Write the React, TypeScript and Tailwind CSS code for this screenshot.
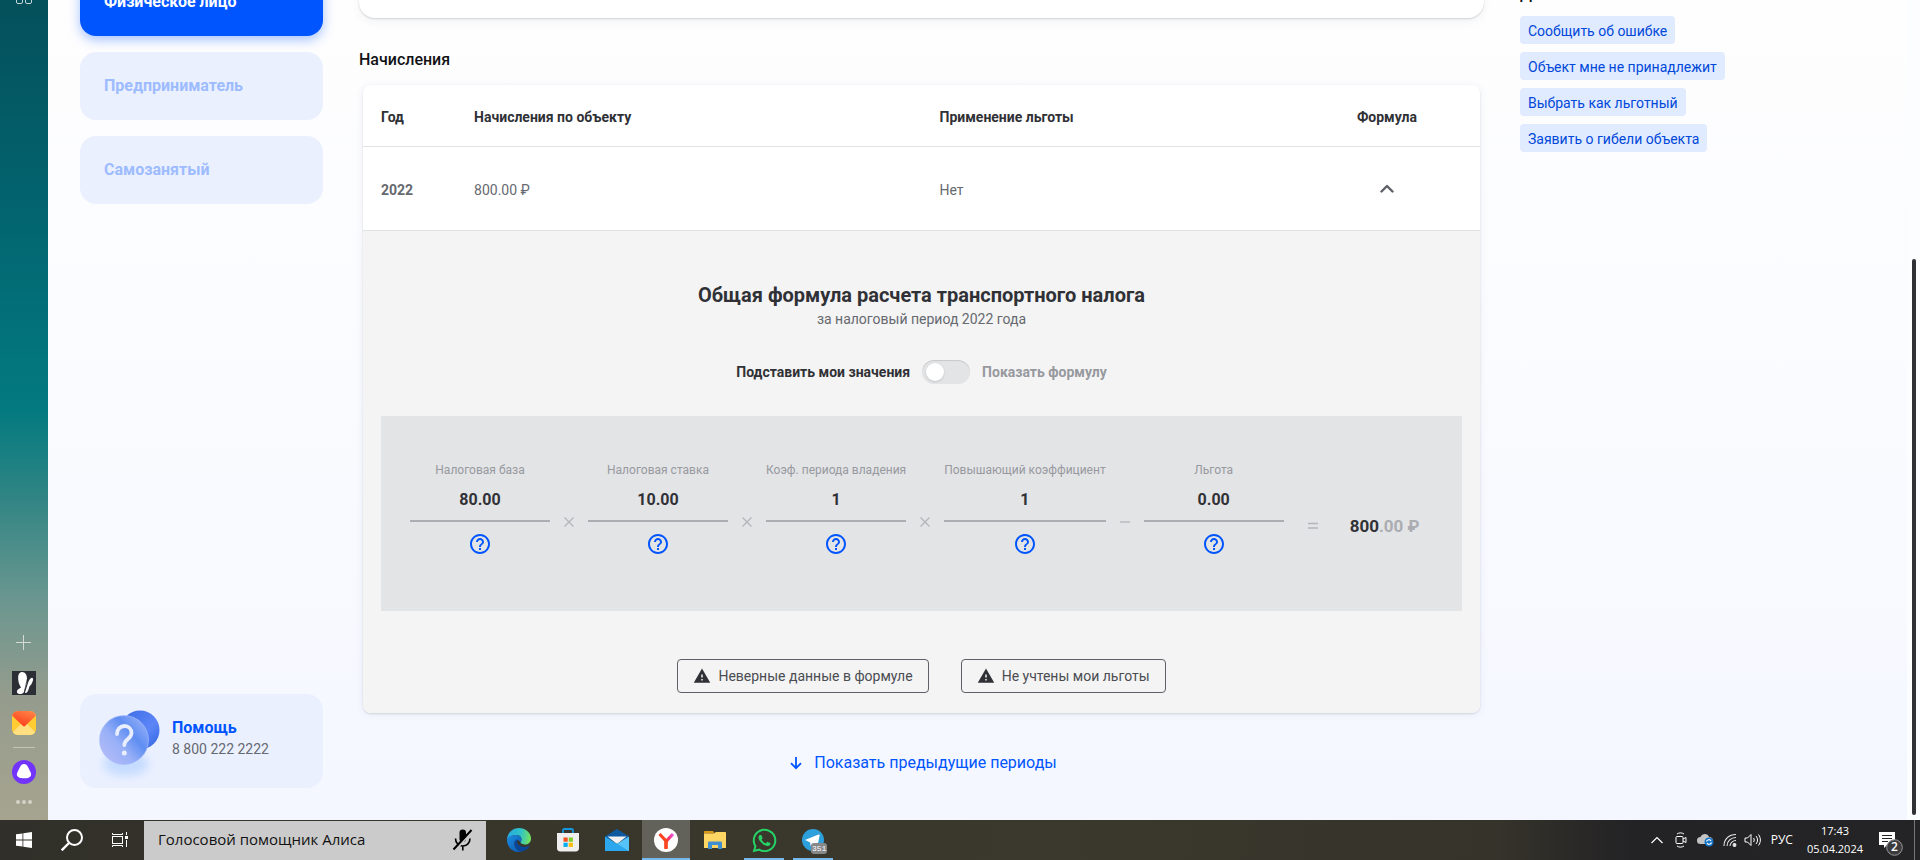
import type { ReactNode } from "react";
import { MdHelpOutline, MdWarning } from "react-icons/md";
import { FaWhatsapp } from "react-icons/fa";

const roboto = "font-['Roboto','Liberation_Sans',sans-serif]";
const segoe = "font-['Open_Sans','Noto_Sans',sans-serif]";

function BrowserRail() {
  return (
    <aside className="flex w-12 shrink-0 flex-col items-center bg-linear-[180deg,#04505b_0%,#02636e_24%,#037a80_50%,#2d8483_60%,#6a968f_73%,#959c8d_85%,#a6a48f_100%]">
      <button aria-label="Табло" className="-mt-3 h-4 w-4">
        <svg viewBox="0 0 16 16" className="h-4 w-4" fill="none" stroke="#c3d6d8">
          <rect x="0.5" y="0.5" width="6" height="6" rx="1.5" />
          <rect x="9.5" y="0.5" width="6" height="6" rx="1.5" />
          <rect x="0.5" y="9.5" width="6" height="6" rx="1.5" />
          <rect x="9.5" y="9.5" width="6" height="6" rx="1.5" />
        </svg>
      </button>
      <div className="flex-1" />
      <button aria-label="Добавить" className="h-4 w-4">
        <svg viewBox="0 0 16 16" className="h-4 w-4" stroke="#d3dad3" fill="none">
          <path d="M7.5 0v15M0 7.5h15" />
        </svg>
      </button>
      <button aria-label="MSN" className="mt-5 h-6 w-6">
        <svg viewBox="0 0 24 24" className="h-6 w-6">
          <rect width="24" height="24" fill="#2b2e35" />
          <path d="M10 1c3.500 0 5 3 5 7 0 2-.3 4-.8 6L12 21c-.5 1.500-3 2.300-5 2-1.500-.3-2.500-1.500-2-3 .6-2 2.500-2.500 4-3.500C6.500 13 6 9 6.200 5.500 6.500 2.500 8 1 10 1z" fill="#fff" />
          <path d="M20.500 7c1.300.8.300 3.500-1 6-.6 1.200-1.500 1.500-2 2.500-.6 1.300-1 5.500-3.500 6.500-1 .3-1-.5-.7-1.500L16 12c1-3 3-5.800 4.500-5z" fill="#fff" />
          <path d="M15.300 8l-3 13" stroke="#2b2e35" strokeWidth="0.700" />
        </svg>
      </button>
      <button aria-label="Почта" className="mt-4 h-6 w-6">
        <svg viewBox="0 0 24 24" className="h-6 w-6">
          <defs>
            <linearGradient id="mailRed" x1="1" y1="0" x2="0.400" y2="1">
              <stop offset="0" stopColor="#ff8a4a" />
              <stop offset="1" stopColor="#fb3f1d" />
            </linearGradient>
            <clipPath id="mailClip"><rect width="24" height="24" rx="6" /></clipPath>
          </defs>
          <g clipPath="url(#mailClip)">
            <rect width="24" height="24" fill="#ffcc33" />
            <path d="M0 24V22L9 13h6l9 9v2z" fill="#ffdf80" />
            <path d="M0 0h24v4.500L13 15c-.6.500-1.400.500-2 0L0 4.500z" fill="url(#mailRed)" />
          </g>
        </svg>
      </button>
      <div className="mt-3 h-px w-[22px] bg-[#c3c4b6]" />
      <button aria-label="Алиса" className="mt-3 h-6 w-6">
        <svg viewBox="0 0 24 24" className="h-6 w-6">
          <circle cx="12" cy="12" r="12" fill="#7234fb" />
          <path d="M12 4c2 0 3 1.200 4 3l2.700 5.500c1 2.300.3 4-1.700 4.900-1.500.6-3 .8-5 .8s-3.500-.2-5-.8c-2-.9-2.700-2.600-1.700-4.900L8 7c1-1.800 2-3 4-3z" fill="#fff" />
        </svg>
      </button>
      <button aria-label="Ещё" className="mt-4 mb-4 flex gap-[2px]">
        <span className="h-1 w-1 rounded-full bg-[#d4d3c9]" />
        <span className="h-1 w-1 rounded-full bg-[#d4d3c9]" />
        <span className="h-1 w-1 rounded-full bg-[#d4d3c9]" />
      </button>
    </aside>
  );
}

function HelpArt() {
  return (
    <svg viewBox="0 0 64 76" className="h-[76px] w-16 shrink-0">
      <defs>
        <linearGradient id="backDisc" x1="0" y1="0" x2="1" y2="1">
          <stop offset="0" stopColor="#3d6be6" />
          <stop offset="0.600" stopColor="#5c86f7" />
          <stop offset="1" stopColor="#2f62e0" />
        </linearGradient>
        <linearGradient id="frontDisc" x1="0.100" y1="0.900" x2="0.900" y2="0.200">
          <stop offset="0" stopColor="#b3bbf8" />
          <stop offset="0.400" stopColor="#98b0f7" />
          <stop offset="0.720" stopColor="#5f8ef2" />
          <stop offset="1" stopColor="#8aa9f7" />
        </linearGradient>
        <filter id="glow" x="-50%" y="-50%" width="200%" height="200%">
          <feGaussianBlur stdDeviation="5" />
        </filter>
      </defs>
      <ellipse cx="29" cy="58" rx="23" ry="12" fill="#c5dcff" filter="url(#glow)" />
      <circle cx="43" cy="24" r="19.500" fill="url(#backDisc)" />
      <circle cx="27" cy="34" r="24.500" fill="url(#frontDisc)" stroke="#a9c0fb" strokeWidth="0.600" />
      <path d="M20 28c0-5 3.500-8 7.500-8s7 3 7 7c0 6-7.200 6-7.200 12" fill="none" stroke="#e9eefe" strokeWidth="3.800" strokeLinecap="round" />
      <circle cx="27.300" cy="47" r="2.500" fill="#e9eefe" />
    </svg>
  );
}

function RoleNav() {
  const idle =
    "h-[68px] rounded-2xl bg-[#ebf0ff] px-6 text-left text-base font-bold text-[#9dbcff]";
  return (
    <nav className="flex w-[243px] shrink-0 flex-col gap-4 pb-8">
      <button className="-mt-8 h-[68px] shrink-0 rounded-2xl bg-[#0055ff] px-6 text-left text-base font-bold text-white shadow-[0_4px_12px_rgba(0,85,255,0.35)]">
        Физическое лицо
      </button>
      <button className={idle}>Предприниматель</button>
      <button className={idle}>Самозанятый</button>
      <div className="flex-1" />
      <a href="#help" className="flex h-[94px] items-start rounded-2xl bg-[#ebf0ff] pt-3 pl-[17px]">
        <HelpArt />
        <span className="mt-[11px] ml-[11px] flex flex-col">
          <span className="text-base leading-[22px] font-bold text-[#0055ff]">Помощь</span>
          <span className="text-sm leading-5 text-[#66696f]">8 800 222 2222</span>
        </span>
      </a>
    </nav>
  );
}

function Operator({ kind }: { kind: "times" | "minus" }) {
  return (
    <div className="flex w-[38px] justify-center pt-[55px]">
      <svg viewBox="0 0 10 10" className="h-[10px] w-[10px]" stroke="#b3b5ba" strokeWidth="1.300" fill="none">
        {kind === "times" ? <path d="M0.500 0.500l9 9M9.500 0.500l-9 9" /> : <path d="M0 5h10" />}
      </svg>
    </div>
  );
}

function Term({ label, value }: { label: string; value: string }) {
  return (
    <div className="flex min-w-[140px] flex-col items-center">
      <span className="text-xs leading-4 whitespace-nowrap text-[#97999f]">{label}</span>
      <span className="mt-[10px] text-base leading-6 font-bold text-[#303136]">{value}</span>
      <span className="mt-2 h-[2px] w-full bg-[#abadb2]" />
      <button aria-label={"Подсказка: " + label} className="mt-[10px] text-[#0055ff]">
        <MdHelpOutline className="h-6 w-6" />
      </button>
    </div>
  );
}

function WarnButton({ children }: { children: ReactNode }) {
  return (
    <button className="flex h-[34px] items-center gap-[7px] rounded border border-[#5d6066] px-[15px] text-sm text-[#4a4c52]">
      <MdWarning className="h-[18px] w-[18px] text-[#303136]" />
      {children}
    </button>
  );
}

function Formula() {
  return (
    <section className="flex flex-col items-center px-[18px] pt-[50px] pb-5">
      <h3 className="text-xl leading-7 font-bold text-[#303136]">
        Общая формула расчета транспортного налога
      </h3>
      <p className="text-sm leading-5 text-[#66696f]">за налоговый период 2022 года</p>
      <label className="mt-[31px] flex cursor-pointer items-center gap-3 text-sm font-bold">
        <span className="text-[#303136]">Подставить мои значения</span>
        <input type="checkbox" className="peer sr-only" />
        <span className="flex h-6 w-12 items-center rounded-full bg-[#e3e4e6] px-1 shadow-[inset_0_1px_1px_rgba(0,0,0,0.12)]">
          <span className="h-[18px] w-[18px] rounded-full bg-white shadow-sm" />
        </span>
        <span className="text-[#97999f]">Показать формулу</span>
      </label>
      <div className="mt-8 flex h-[195px] w-full bg-[#e3e4e6] px-[29px] pt-[46px]">
        <Term label="Налоговая база" value="80.00" />
        <Operator kind="times" />
        <Term label="Налоговая ставка" value="10.00" />
        <Operator kind="times" />
        <Term label="Коэф. периода владения" value="1" />
        <Operator kind="times" />
        <Term label="Повышающий коэффициент" value="1" />
        <Operator kind="minus" />
        <Term label="Льгота" value="0.00" />
        <div className="flex w-[58px] justify-center pt-[59px]">
          <svg viewBox="0 0 10 10" className="h-[10px] w-[10px]" stroke="#b3b5ba" strokeWidth="1.300" fill="none">
            <path d="M0 2.500h10M0 7h10" />
          </svg>
        </div>
        <div className="pt-[52px] pl-2 text-[17px] leading-6 font-bold whitespace-nowrap text-[#303136]">
          800<span className="text-[#abadb2]">.00 ₽</span>
        </div>
      </div>
      <div className="mt-12 flex gap-8">
        <WarnButton>Неверные данные в формуле</WarnButton>
        <WarnButton>Не учтены мои льготы</WarnButton>
      </div>
    </section>
  );
}

function Charges() {
  return (
    <main className="flex min-w-0 flex-1 flex-col">
      <div className="-mt-4 h-[34px] shrink-0 rounded-2xl bg-white shadow-[0_1px_2px_rgba(0,0,0,0.15),0_4px_10px_rgba(40,50,90,0.05)]" />
      <h2 className="mt-[30px] text-base leading-6 font-medium text-[#111215]">Начисления</h2>
      <div className="mx-1 mt-[13px] overflow-hidden rounded-lg bg-white shadow-[0_1px_2px_rgba(0,0,0,0.12),0_1px_8px_rgba(40,60,110,0.08)]">
        <table className="w-full table-fixed border-collapse text-sm text-[#66696f]">
          <thead>
            <tr className="h-[61px] border-b border-[#e1e2e4] text-left text-[#303136]">
              <th className="w-1/12 pt-1 pl-[18px] font-bold">Год</th>
              <th className="w-5/12 pt-1 pl-[18px] font-bold">Начисления по объекту</th>
              <th className="w-4/12 pt-1 pl-[18px] font-bold">Применение льготы</th>
              <th className="w-2/12 pt-1 text-center font-bold">Формула</th>
            </tr>
          </thead>
          <tbody>
            <tr className="h-[84px] border-b border-[#e1e2e4]">
              <td className="pt-1 pl-[18px] font-bold">2022</td>
              <td className="pt-1 pl-[18px]">800.00 ₽</td>
              <td className="pt-1 pl-[18px]">Нет</td>
              <td className="text-center">
                <button aria-label="Свернуть" className="align-middle">
                  <svg viewBox="0 0 14 10" className="h-[10px] w-[14px]" fill="none" stroke="#5d6066" strokeWidth="2.400" strokeLinecap="round" strokeLinejoin="round">
                    <path d="M1.500 7.500L7 2l5.500 5.500" />
                  </svg>
                </button>
              </td>
            </tr>
            <tr>
              <td colSpan={4} className="bg-[#f4f4f4] p-0">
                <Formula />
              </td>
            </tr>
          </tbody>
        </table>
      </div>
      <a href="#previous" className="mt-[38px] flex items-center justify-center gap-3 pl-1 text-base leading-6 text-[#0055ff]">
        <svg viewBox="0 0 12 14" className="h-[14px] w-3" fill="none" stroke="#0055ff" strokeWidth="1.800">
          <path d="M6 1v11M1 7.200l5 5 5-5" />
        </svg>
        Показать предыдущие периоды
      </a>
    </main>
  );
}

const actions = [
  "Сообщить об ошибке",
  "Объект мне не принадлежит",
  "Выбрать как льготный",
  "Заявить о гибели объекта",
];

function Actions() {
  return (
    <aside className="flex w-[387px] shrink-0 flex-col items-start gap-2">
      <h2 className="-mt-[18px] mb-[2px] text-base leading-6 font-medium text-[#111215]">Действия</h2>
      {actions.map((text) => (
        <a key={text} href="#action" className="rounded bg-[#e1ebff] px-2 pt-[5px] pb-[3px] text-sm leading-5 text-[#0048d9]">
          {text}
        </a>
      ))}
    </aside>
  );
}

function Task({ label, state = "", children }: { label: string; state?: "" | "open" | "active"; children: ReactNode }) {
  return (
    <button
      aria-label={label}
      className={"relative flex h-10 w-12 items-center justify-center " + (state === "active" ? "bg-[#63625a]" : "")}
    >
      {children}
      {state === "active" && <span className="absolute inset-x-0 bottom-0 h-[2px] bg-[#76b9ed]" />}
      {state === "open" && <span className="absolute inset-x-1 bottom-0 h-[2px] bg-[#76b9ed]" />}
    </button>
  );
}

function Taskbar() {
  return (
    <footer className={"flex h-10 shrink-0 bg-linear-[90deg,#302f29_0%,#38362b_25%,#3b392d_55%,#35332a_78%,#232225_85%,#242325_100%] text-white " + segoe}>
      <Task label="Пуск">
        <svg viewBox="0 0 16 16" className="h-4 w-4" fill="#fff">
          <path d="M0 2.300L6.500 1.400V7.600H0zM7.300 1.300L16 0V7.600H7.300zM0 8.400H6.500V14.600L0 13.700zM7.300 8.400H16V16L7.300 14.700z" />
        </svg>
      </Task>
      <Task label="Поиск">
        <svg viewBox="0 0 22 22" className="h-[22px] w-[22px]" fill="none" stroke="#fff" strokeWidth="2">
          <circle cx="13.500" cy="8.500" r="7.500" />
          <path d="M8 14L0.700 21.300" strokeWidth="2.400" />
        </svg>
      </Task>
      <Task label="Просмотр задач">
        <svg viewBox="0 0 16 16" className="h-4 w-4" fill="none" stroke="#fff">
          <rect x="0.500" y="4.500" width="10" height="7" />
          <path d="M0.500 1v1.500h10V1M0.500 15v-1.500h10V15M14.500 0v3M14.500 8v7" />
          <rect x="13.500" y="4.500" width="2" height="2" fill="#fff" />
        </svg>
      </Task>
      <div className="mt-px flex w-[342px] items-center bg-[#cbcbcb] pr-3 pb-[2px] pl-[14px]">
        <input
          aria-label="Голосовой помощник Алиса"
          placeholder="Голосовой помощник Алиса"
          className="min-w-0 flex-1 bg-transparent text-[15px] text-black outline-none placeholder:text-[#111]"
        />
        <button aria-label="Микрофон">
          <svg viewBox="0 0 22 24" className="h-6 w-[22px]" fill="none" stroke="#000" strokeWidth="1.600">
            <rect x="7.500" y="1.500" width="6.500" height="12.500" rx="3.200" fill="#000" stroke="none" />
            <path d="M3.500 10.500c0 5 3.500 7.500 7.200 7.500s7.300-2.500 7.300-7.500M10.800 18v4.500" />
            <path d="M3.500 22L21 2.500" stroke="#cbcbcb" strokeWidth="2" />
            <path d="M1.500 21.500L19.500 2" strokeWidth="2" />
          </svg>
        </button>
      </div>
      <div className="ml-[9px] flex gap-px">
        <Task label="Edge">
          <svg viewBox="0 0 24 24" className="h-6 w-6">
            <defs>
              <linearGradient id="edgeTop" x1="0" y1="0.400" x2="1" y2="0.500">
                <stop offset="0" stopColor="#28a8e0" />
                <stop offset="0.550" stopColor="#2fc3c9" />
                <stop offset="1" stopColor="#74e35c" />
              </linearGradient>
              <linearGradient id="edgeLow" x1="0" y1="0" x2="1" y2="1">
                <stop offset="0" stopColor="#1c8fe0" />
                <stop offset="1" stopColor="#0b55ae" />
              </linearGradient>
            </defs>
            <path d="M0 12C0 5 5.500 0 12 0c7.500 0 12 5.500 12 10.500 0 4-3 6-6 6-2.500 0-4.500-1-4.500-2.200 0-.8 1-1.200 1-3C14.500 9 12.500 7 9.500 7 4.500 7 0 10 0 12z" fill="url(#edgeTop)" />
            <path d="M0 12C0 9 4 7 8.500 7c3.500 0 6 2 6 4.500 0 1.500-1 2-1 2.800-2-3-5.500-2.500-6 .7-.5 4 3 8.500 7.500 8.500C13.500 24 12.500 24 12 24 5 24 0 18.500 0 12z" fill="url(#edgeLow)" />
            <path d="M7.500 15c0-2 1.300-3.500 3-3.700C8.500 15.500 13 19 17.500 19c2 0 3.500-.7 4.700-1.400.4-.2.700.1.400.5C21 21 18.500 23 15 23.500 10.500 23.500 7.500 19 7.500 15z" fill="#0a4697" />
          </svg>
        </Task>
        <Task label="Магазин">
          <svg viewBox="0 0 24 24" className="h-6 w-6">
            <path d="M7 5V2.500C7 1.500 7.500 1 8.500 1h7c1 0 1.500.5 1.500 1.500V5" fill="none" stroke="#1597dd" strokeWidth="1.800" />
            <path d="M1 5h22v15c0 2-1 3.500-3.500 3.500h-15C2 23.500 1 22 1 20z" fill="#efefef" />
            <path d="M7.500 9.500h4.200v4.200H7.500z" fill="#f1511b" />
            <path d="M12.700 9.500h4.200v4.200h-4.200z" fill="#80cc28" />
            <path d="M7.500 14.700h4.200v4.200H7.500z" fill="#00adef" />
            <path d="M12.700 14.700h4.200v4.200h-4.200z" fill="#fbbc09" />
          </svg>
        </Task>
        <Task label="Почта Windows">
          <svg viewBox="0 0 24 24" className="h-6 w-6">
            <path d="M0 8.500L12 1l12 7.500V12H0z" fill="#0f5a9e" />
            <path d="M2.500 8.500h19L12 16z" fill="#f2f2f2" />
            <path d="M24 8.500V23H0z" fill="#55c3f7" />
            <path d="M0 8.500L24 23H0z" fill="#2ba7ee" />
          </svg>
        </Task>
        <Task label="Яндекс Браузер" state="active">
          <svg viewBox="0 0 24 24" className="h-6 w-6">
            <defs>
              <linearGradient id="yArm" x1="0" y1="1" x2="1" y2="0">
                <stop offset="0.200" stopColor="#ff4a1c" />
                <stop offset="0.600" stopColor="#f8327a" />
                <stop offset="1" stopColor="#e45ce8" />
              </linearGradient>
            </defs>
            <circle cx="12" cy="12" r="12" fill="#fff" />
            <path d="M12 20.500V13.500L19 6" fill="none" stroke="url(#yArm)" strokeWidth="3.200" />
            <path d="M5.500 6L12 13v8" fill="none" stroke="#fb4420" strokeWidth="3.200" />
          </svg>
        </Task>
        <Task label="Проводник">
          <svg viewBox="0 0 24 24" className="h-6 w-6">
            <path d="M1 4c0-.6.300-1 1-1h8l2 2.500H1z" fill="#d99a1c" />
            <path d="M1 5.500h10L13 4h9c.6 0 1 .4 1 1v15H1z" fill="#ffd663" />
            <path d="M5 21v-6c0-1 .6-1.500 1.500-1.500h11c1 0 1.500.5 1.500 1.500v6h-4v-4H9v4z" fill="#3f8fd1" />
          </svg>
        </Task>
        <Task label="WhatsApp" state="open">
          <FaWhatsapp className="h-[27px] w-[27px] text-[#25d366]" />
        </Task>
        <Task label="Telegram" state="open">
          <svg viewBox="0 0 24 24" className="h-6 w-6">
            <circle cx="12" cy="12" r="11" fill="#2d9fdb" />
            <path d="M4 12l13.500-5.500c.8-.3 1.300.2 1.100 1L16.500 18c-.2.800-.8 1-1.500.5l-3.500-2.600L9.500 18l-.3-3.500z" fill="#fff" />
          </svg>
          <span className="absolute top-[23px] left-[22px] rounded-[3px] bg-[#87888a] px-px font-['Liberation_Mono',monospace] text-[8px] leading-[11px] text-white">351</span>
        </Task>
      </div>
      <div className="flex-1" />
      <div className="flex items-center">
        <svg viewBox="0 0 12 8" className="h-2 w-3" fill="none" stroke="#fff" strokeWidth="1.200"><path d="M0.500 7L6 1.500 11.500 7" /></svg>
        <svg viewBox="0 0 12 16" className="ml-3 h-4 w-3" fill="none" stroke="#fff"><rect x="1" y="4.500" width="7" height="7" rx="1" /><path d="M8 7l3-1.500v5L8 9M2 2c2-1.500 5-1.500 7 0M2 14c2 1.500 5 1.500 7 0" /></svg>
        <svg viewBox="0 0 17 14" className="ml-[10px] h-[14px] w-[17px]"><path d="M3.500 11a3.500 3.500 0 010-7C5 0 11 0 12 4c3 0 4 2 4 4v3z" fill="#c3c3c3" /><circle cx="12" cy="9" r="4.500" fill="#1173c7" /><path d="M9.500 8.500c.5-2 3.500-2.500 4.500-.5M14.500 9.500c-.5 2-3.500 2.500-4.500.5" stroke="#fff" fill="none" strokeWidth="1.200" /></svg>
        <svg viewBox="0 0 14 14" className="ml-[9px] h-[14px] w-[14px]" fill="none" stroke="#e8e8e8" strokeWidth="1.100"><path d="M1 13C1 6 6 1.500 13 1.500M4 13c0-5 4-8.500 9-8.500M7 13c0-3 3-5.500 6-5.500" /><circle cx="11.500" cy="12" r="1.400" fill="#e8e8e8" /></svg>
        <svg viewBox="0 0 17 14" className="ml-[7px] h-[14px] w-[17px]" fill="none" stroke="#fff"><path d="M1 5h2.500L7 1.500v11L3.500 9H1zM9.500 5c1 1.200 1 2.800 0 4M12 3c2 2.500 2 5.500 0 8M14.500 1.500c2.500 3.500 2.500 7.500 0 11" /></svg>
        <span className="ml-[10px] text-xs">РУС</span>
        <div className="ml-[14px] flex flex-col items-center text-[11px] leading-[18px]">
          <time>17:43</time>
          <time>05.04.2024</time>
        </div>
        <button aria-label="Уведомления" className="relative ml-4 h-10 w-[26px]">
          <svg viewBox="0 0 26 40" className="h-10 w-[26px]">
            <path d="M0 12h16v13H8l-3 3v-3H0z" fill="#fff" />
            <path d="M3 15.500h10M3 18.500h10M3 21.500h6" stroke="#242325" />
            <circle cx="15.500" cy="27.500" r="7.800" fill="#3c3b3e" stroke="#98989a" />
          </svg>
          <span className="absolute top-[19px] left-3 text-xs leading-4 font-semibold">2</span>
        </button>
        <div className="ml-[9px] h-10 w-[6px] border-l border-[#77777a]" />
      </div>
    </footer>
  );
}

export default function App() {
  return (
    <div className={"flex h-screen flex-col overflow-hidden " + roboto}>
      <div className="flex min-h-0 flex-1">
        <BrowserRail />
        <div className="flex min-w-0 flex-1 overflow-hidden bg-linear-to-b from-[#fefefe] via-[#fafbff] to-[#f4f7ff]">
          <div className="flex min-w-0 flex-1 gap-9 pl-8">
            <RoleNav />
            <Charges />
            <Actions />
          </div>
          <div className="flex w-[13px] shrink-0 flex-col bg-[#fcfdff] pr-1 pl-[5px] pb-[5px]">
            <div className="flex-[259]" />
            <div className="flex-[556] rounded-full bg-[#303136]" />
          </div>
        </div>
      </div>
      <Taskbar />
    </div>
  );
}
